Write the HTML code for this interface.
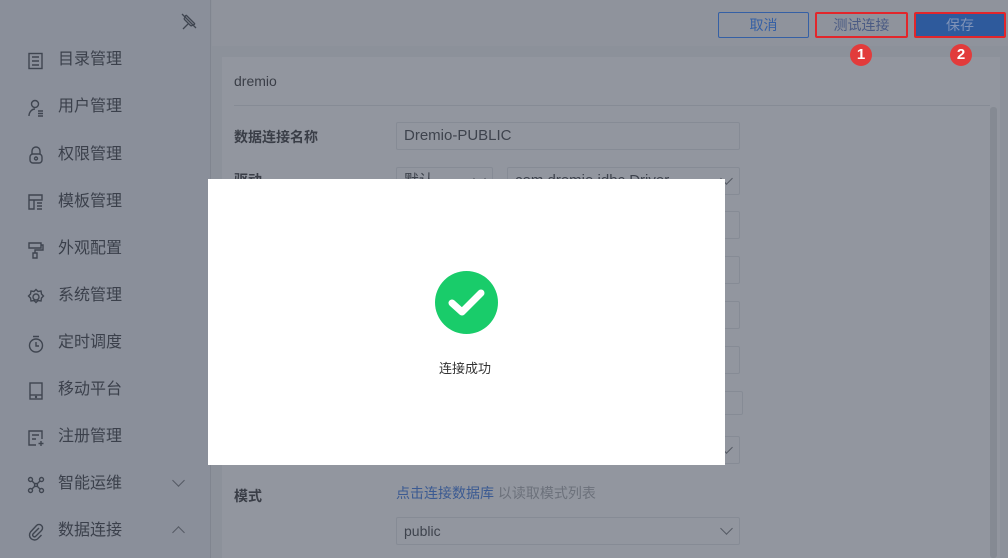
<!DOCTYPE html>
<html><head><meta charset="utf-8"><style>
*{margin:0;padding:0;box-sizing:border-box}
body{width:1008px;height:558px;overflow:hidden;position:relative;background:#8c919a;font-family:"Liberation Sans","Noto Sans CJK SC",sans-serif}
.abs{position:absolute}
#side{left:0;top:0;width:211px;height:558px;background:#8a8f9a;border-right:1px solid #80858f}
.mi{position:absolute;left:58px;font-size:16px;color:#3b404b;line-height:20px;margin-top:1px}
.si{position:absolute;left:27px;margin-top:1px}
#top{left:212px;top:0;width:796px;height:46px;background:#8f939c}
.btn{position:absolute;top:12px;height:26px;font-size:14px;text-align:center;line-height:24px;border-radius:2px}
#panel{left:222px;top:57px;width:778px;height:501px;background:#92969f}
.lbl{position:absolute;left:234px;font-size:14px;font-weight:bold;color:#3a3e47}
.inp{position:absolute;border:1px solid #868b95;height:28px;border-radius:2px;font-size:15px;color:#3e434d;line-height:26px;padding-left:7px}
.chev{position:absolute;right:8px;top:6px;width:9px;height:9px;border-right:1.3px solid #555a64;border-bottom:1.3px solid #555a64;transform:rotate(45deg)}
.badge{position:absolute;top:44px;width:22px;height:22px;border-radius:50%;background:#e23b3b;color:#fff;font-weight:bold;font-size:15px;text-align:center;line-height:22px;z-index:5}
svg.si{fill:none;stroke:#3f4550;stroke-width:1.4}
</style></head><body>
<div id="side" class="abs">
<svg class="abs" style="left:180px;top:12px" width="18" height="18" viewBox="0 0 18 18" fill="none" stroke="#3f4550" stroke-width="1.3"><path d="M6 3 L15 12 M4 7 L11 14 M6 3 L4 7 M15 12 L11 14 M8 12 L3 17 M2 2 L16 16"/></svg>
<svg class="si" style="top:51px" width="18" height="18"><rect x="2" y="1.5" width="13" height="15"/><path d="M5 5h7M5 9h7M5 13h7"/></svg><div class="mi" style="top:49px">目录管理</div>
<svg class="si" style="top:98px" width="18" height="18"><circle cx="8" cy="5" r="3.5"/><path d="M2 17c0-4 3-7 6-7M11 12h5M11 14.5h5M11 17h5"/></svg><div class="mi" style="top:96px">用户管理</div>
<svg class="si" style="top:145px" width="18" height="18"><path d="M5 8V5a4 4 0 0 1 8 0v3"/><rect x="3" y="8" width="12" height="9" rx="3"/><circle cx="9" cy="12.5" r="1.5"/></svg><div class="mi" style="top:144px">权限管理</div>
<svg class="si" style="top:192px" width="18" height="18"><path d="M2 2h13v5H2zM2 7v9h5V7M10 10h5M10 13h5M10 16h5"/></svg><div class="mi" style="top:191px">模板管理</div>
<svg class="si" style="top:240px" width="18" height="18"><path d="M2 2h12v5H2zM14 4h2v5H8v3M6 12h4v5H6z"/></svg><div class="mi" style="top:238px">外观配置</div>
<svg class="si" style="top:287px" width="18" height="18"><circle cx="9" cy="9" r="3"/><path d="M9 1.5l2 2 3-.5.5 3 2 2-2 2-.5 3-3-.5-2 2-2-2-3 .5-.5-3-2-2 2-2 .5-3 3 .5z"/></svg><div class="mi" style="top:285px">系统管理</div>
<svg class="si" style="top:334px" width="18" height="18"><circle cx="9" cy="10.5" r="6.5"/><path d="M6 1.5h6M9 7v4h3"/></svg><div class="mi" style="top:332px">定时调度</div>
<svg class="si" style="top:381px" width="18" height="18"><rect x="3" y="1" width="12" height="16"/><path d="M3 13h12"/><circle cx="9" cy="15" r=".5"/></svg><div class="mi" style="top:379px">移动平台</div>
<svg class="si" style="top:428px" width="18" height="18"><path d="M9 16H2V2h13v8M5 6h7M5 10h4M14 12v5M11.5 14.5h5"/></svg><div class="mi" style="top:426px">注册管理</div>
<svg class="si" style="top:475px" width="18" height="18"><circle cx="3.5" cy="3.5" r="2"/><circle cx="14.5" cy="3.5" r="2"/><circle cx="3.5" cy="14.5" r="2"/><circle cx="14.5" cy="14.5" r="2"/><circle cx="9" cy="9" r="1.5"/><path d="M5 5l3 3M13 5l-3 3M5 13l3-3M13 13l-3-3"/></svg><div class="mi" style="top:473px">智能运维</div>
<div class="chev" style="left:174px;top:476px;right:auto"></div>
<svg class="si" style="top:522px" width="18" height="18"><path d="M12 5l-6 6a1.8 1.8 0 0 0 2.5 2.5l6-6a3.5 3.5 0 0 0-5-5L3.5 9a5 5 0 0 0 7 7l4-4"/></svg><div class="mi" style="top:520px">数据连接</div>
<div class="chev" style="left:174px;top:528px;right:auto;transform:rotate(225deg)"></div>
</div>
<div id="top" class="abs"></div>
<div id="panel" class="abs"></div>
<div class="btn" style="left:718px;width:91px;border:1px solid #3560a5;color:#3560a5">取消</div>
<div class="btn" style="left:815px;width:93px;border:2px solid #e2262b;color:#4b5b84;line-height:22px">测试连接</div>
<div class="btn" style="left:914px;width:92px;background:#2e5a9c;border:2px solid #e2262b;color:#7f93b8;line-height:22px">保存</div>
<div class="badge" style="left:850px">1</div>
<div class="badge" style="left:950px">2</div>
<div class="abs" style="left:234px;top:73px;font-size:14px;color:#3a3e47">dremio</div>
<div class="abs" style="left:234px;top:105px;width:756px;height:1px;background:#868b95"></div>
<div class="abs" style="left:990px;top:107px;width:7px;height:451px;background:#858a93;border-radius:3px"></div>
<div class="lbl" style="top:127px">数据连接名称</div>
<div class="inp" style="left:396px;top:122px;width:344px">Dremio-PUBLIC</div>
<div class="lbl" style="top:170px">驱动</div>
<div class="inp" style="left:396px;top:167px;width:97px">默认<span class="chev"></span></div>
<div class="inp" style="left:507px;top:167px;width:233px">com.dremio.jdbc.Driver<span class="chev"></span></div>
<div class="inp" style="left:396px;top:211px;width:344px"></div>
<div class="inp" style="left:396px;top:256px;width:344px"></div>
<div class="inp" style="left:396px;top:301px;width:344px"></div>
<div class="inp" style="left:396px;top:346px;width:344px"></div>
<div class="inp" style="left:396px;top:391px;width:347px;height:24px"></div>
<div class="inp" style="left:396px;top:436px;width:344px"><span class="chev"></span></div>
<div class="lbl" style="top:486px">模式</div>
<div class="abs" style="left:396px;top:483px;font-size:14px;color:#3b5a92">点击连接数据库 <span style="color:#6c717b">以读取模式列表</span></div>
<div class="inp" style="left:396px;top:517px;width:344px;font-size:14px">public<span class="chev"></span></div>
<div class="abs" style="left:208px;top:179px;width:517px;height:286px;background:#fff"></div>
<svg class="abs" style="left:435px;top:271px" width="64" height="64" viewBox="0 0 64 64"><circle cx="31.5" cy="31.5" r="31.5" fill="#19cc6a"/><path d="M17 32 L27 41 L46 22" stroke="#fff" stroke-width="7" fill="none" stroke-linecap="round" stroke-linejoin="round"/></svg>
<div class="abs" style="left:439px;top:358px;font-size:13px;color:#333">连接成功</div>
</body></html>
